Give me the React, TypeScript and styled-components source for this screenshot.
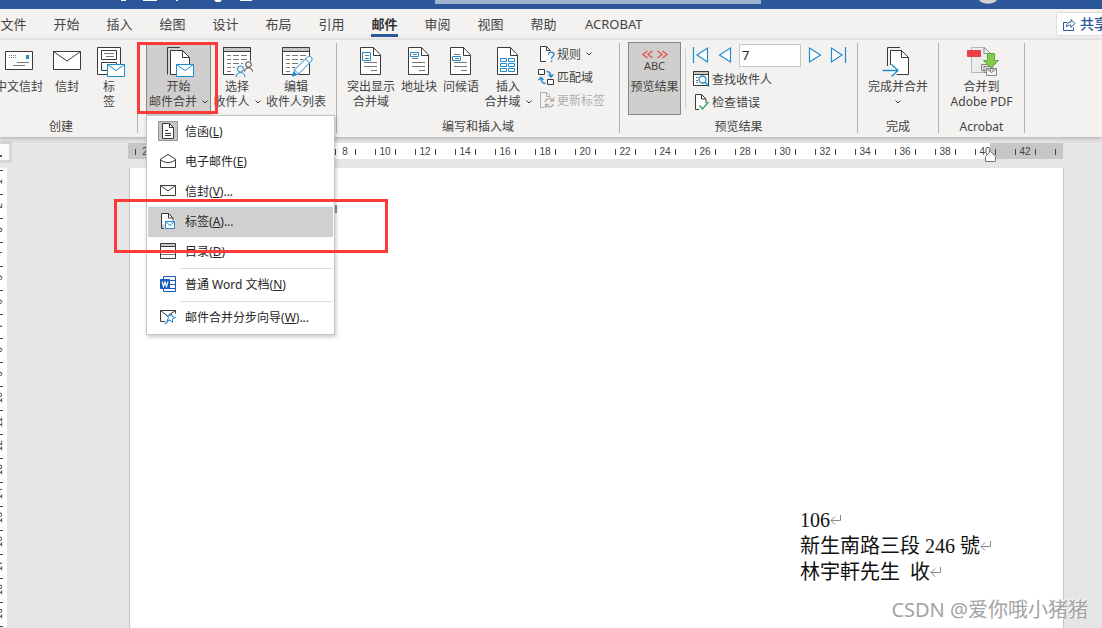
import React from "react";
import styled, { createGlobalStyle, css } from "styled-components";

const ui = `"Noto Sans", "Noto Sans CJK SC", sans-serif`;
const ink = "#3b3a39";
const soft = "#797775";
const blue = "#1e8bcd";
const word = "#2b579a";
const red = "#fe3a39";

const Global = createGlobalStyle`
  *, *::before, *::after { box-sizing: border-box; }
  body { margin: 0; background: #e6e6e6; font-family: ${ui}; font-size: 12px; color: #444; }
  button { font: inherit; color: inherit; background: none; border: 0; padding: 0; margin: 0; }
  svg { display: block; overflow: visible; flex: none; }
`;

const Shell = styled.div`
  position: relative;
  min-height: 100vh;
  display: flex;
  flex-direction: column;
  overflow: hidden;
`;

/* ---------- title bar and tabs ---------- */

const TitleBar = styled.header`
  height: 9px;
  background: ${word};
  display: flex;
`;
const SearchStrip = styled.div`
  flex: none;
  width: 326px;
  height: 4px;
  background: #a0b4d2;
`;
const TitleLeft = styled.div`
  flex: 435 1 0;
`;
const TitleRight = styled.div`
  flex: 341 1 0;
  display: flex;
  justify-content: flex-end;
`;
const Avatar = styled.span`
  margin-right: 105px;
`;

const TabRow = styled.nav`
  height: 31px;
  display: flex;
  background: #f3f2f1;
`;
const Tabs = styled.div`
  display: flex;
  flex: 1;
  margin-left: -13px;
`;
const Tab = styled.button<{ $active?: boolean; $wide?: boolean }>`
  min-width: 53px;
  padding: 0 ${(p) => (p.$wide ? 15 : 0)}px 2px;
  font-size: 13px;
  line-height: 20px;
  display: flex;
  align-items: center;
  justify-content: center;
  ${(p) =>
    p.$active &&
    css`
      font-weight: 700;
      color: #333;
      background: linear-gradient(${word}, ${word}) 50% 25px / 27px 3px no-repeat;
    `}
`;
const Share = styled.button`
  flex: none;
  width: 60px;
  height: 24px;
  margin: 3px -14px 0 0;
  padding-left: 6px;
  display: flex;
  align-items: center;
  gap: 4px;
  background: #fff;
  border: 1px solid #e1dfdd;
  border-radius: 2px;
  color: ${word};
  font-size: 14px;
  font-weight: 500;
  line-height: 20px;
  white-space: nowrap;
`;

/* ---------- ribbon ---------- */

const Ribbon = styled.section`
  position: relative;
  z-index: 2;
  height: 97px;
  padding-top: 2px;
  display: flex;
  background: #f3f2f1;
  box-shadow: 0 1px 5px rgba(0, 0, 0, 0.28);
`;
const Group = styled.div<{ $w: number; $pull?: number }>`
  flex: none;
  width: ${(p) => p.$w}px;
  margin-left: ${(p) => -(p.$pull || 0)}px;
  display: flex;
  flex-direction: column;
  justify-content: space-between;
  padding-bottom: 2px;
`;
const GroupBody = styled.div<{ $pad?: number; $center?: boolean }>`
  display: flex;
  padding-left: ${(p) => p.$pad || 0}px;
  justify-content: ${(p) => (p.$center ? "center" : "flex-start")};
`;
const GroupLabel = styled.div`
  text-align: center;
  line-height: 16px;
`;
const Divider = styled.i<{ $inner?: boolean }>`
  flex: none;
  width: 1px;
  height: ${(p) => (p.$inner ? 60 : 90)}px;
  margin: ${(p) => (p.$inner ? "7px 7px 0 4px" : "1px 0 0")};
  background: ${(p) => (p.$inner ? "#d2d0ce" : "#b3b0ad")};
`;
const Big = styled.button<{ $w: number; $on?: "open" | "pressed" }>`
  flex: none;
  width: ${(p) => p.$w}px;
  height: 73px;
  padding-top: 4px;
  display: flex;
  flex-direction: column;
  align-items: center;
  border: 1px solid transparent;
  line-height: 15px;
  white-space: nowrap;
  ${(p) => p.$on && css`background: #d0cfcd;`}
  ${(p) => p.$on === "open" && css`border-color: #d0cfcd #8a8886;`}
  ${(p) => p.$on === "pressed" && css`border-color: #8a8886;`}
`;
const Pic = styled.span`
  height: 30px;
  margin-bottom: 2px;
  display: flex;
  flex-direction: column;
  align-items: center;
`;
const Line = styled.span`
  height: 15px;
  display: flex;
  align-items: center;
  gap: 5px;
`;
const Abc = styled.span`
  font-size: 11px;
  line-height: 12px;
`;
const Column = styled.div<{ $top?: number; $left?: number }>`
  display: flex;
  flex-direction: column;
  align-items: flex-start;
  padding-top: ${(p) => p.$top || 0}px;
  margin-left: ${(p) => p.$left || 0}px;
`;
const Small = styled.button`
  height: 23px;
  display: flex;
  align-items: center;
  gap: 1px;
  white-space: nowrap;
  &:disabled { color: #b1afad; }
  & > span { display: flex; align-items: center; gap: 5px; }
`;
const Records = styled.div`
  height: 24px;
  display: flex;
  align-items: center;
`;
const Step = styled.button<{ $w: number }>`
  width: ${(p) => p.$w}px;
  height: 24px;
  display: flex;
  align-items: center;
`;
const RecordInput = styled.input`
  width: 62px;
  height: 23px;
  margin-right: 8px;
  padding: 0 2px;
  border: 1px solid #c8c6c4;
  background: #fff;
  color: #222;
  font: 13px ${ui};
`;

/* ---------- drop-down menu ---------- */

const Anchor = styled.div`
  position: relative;
  flex: none;
`;
const Menu = styled.div`
  position: absolute;
  top: 73px;
  left: 0;
  width: 189px;
  padding: 1px;
  display: flex;
  flex-direction: column;
  background: #fff;
  border: 1px solid #c6c6c6;
  box-shadow: 1px 2px 4px rgba(0, 0, 0, 0.22);
  color: #262626;
`;
const Item = styled.button<{ $hot?: boolean }>`
  position: relative;
  height: 30px;
  padding: 0 0 2px 10px;
  display: flex;
  align-items: center;
  gap: 7px;
  text-align: left;
  white-space: nowrap;
  background: ${(p) => (p.$hot ? "#d2d0ce" : "transparent")};
`;
const ItemIcon = styled.span<{ $checked?: boolean }>`
  width: 20px;
  height: 20px;
  display: flex;
  align-items: center;
  justify-content: center;
  border: 1px solid ${(p) => (p.$checked ? "#979593" : "transparent")};
  background: ${(p) => (p.$checked ? "#c8c6c4" : "transparent")};
`;
const Rule = styled.hr`
  width: 153px;
  height: 1px;
  margin: 1px 0 1px auto;
  border: 0;
  background: #dcdcdc;
`;
const ButtonMark = styled.i`
  position: absolute;
  inset: 0 -7px 1px -9px;
  border: 3px solid ${red};
  pointer-events: none;
`;
const ItemMark = styled.i`
  position: absolute;
  inset: -8px -55px -16px -34px;
  border: 3px solid ${red};
  pointer-events: none;
  z-index: 1;
`;

/* ---------- document area ---------- */

const Workspace = styled.main`
  flex: 1;
  display: flex;
  background: #e6e6e6;
`;
const Rail = styled.aside`
  flex: none;
  width: 128px;
  padding-top: 4px;
`;
const TabStop = styled.div`
  width: 12px;
  height: 22px;
  margin-bottom: 5px;
  border: 3px solid #d6d6d6;
  border-left: 0;
  background: #fcfcfc;
  display: flex;
  align-items: flex-end;
  padding-bottom: 3px;
  &::before { content: ""; width: 2px; height: 2px; background: #555; }
`;
const VRuler = styled.div`
  width: 7px;
  padding-top: 2px;
  background: #fff;
  overflow: hidden;
  &::after { content: ""; display: block; width: 3px; height: 1px; background: #444; }
`;
const VCell = styled.div`
  height: 24px;
  display: flex;
  align-items: center;
  background: linear-gradient(#444, #444) 0 0 / 3px 1px no-repeat;
`;
const VNumber = styled.span`
  flex: none;
  margin-left: -7px;
  width: 12px;
  writing-mode: vertical-rl;
  transform: rotate(180deg);
  font: 10px/12px "Liberation Sans", sans-serif;
`;
const Sheet = styled.div`
  flex: 1;
  min-width: 0;
  margin-right: 38px;
  padding-top: 6px;
  display: flex;
  flex-direction: column;
`;
const HRuler = styled.div`
  position: relative;
  height: 16px;
  margin: 0 1px 9px 0;
  background: linear-gradient(#c6c6c6, #c6c6c6) 0 0 / 57px 100% no-repeat,
    linear-gradient(#c6c6c6, #c6c6c6) 100% 0 / 73px 100% no-repeat, #fff;
`;
const Cells = styled.div`
  height: 16px;
  display: flex;
  overflow: hidden;
  & > :first-child { margin-left: -3px; }
`;
const Cell = styled.span`
  flex: none;
  width: 40px;
  padding-top: 2px;
  display: flex;
  align-items: center;
  justify-content: center;
  font: 10px/14px "Liberation Sans", sans-serif;
  background: linear-gradient(#444, #444) 10px 6px / 1px 6px no-repeat,
    linear-gradient(#444, #444) 30px 6px / 1px 6px no-repeat;
`;
const Indent = styled.svg`
  position: absolute;
  right: 66px;
  top: 7px;
`;
const Page = styled.article`
  flex: 1;
  margin-left: 1px;
  padding-top: 37px;
  background: #fff;
  border: 1px solid #c6c6c6;
  border-width: 0 1px;
  color: #111;
`;
const Caret = styled.i`
  display: block;
  width: 2px;
  height: 8px;
  margin-left: 205px;
  background: #8f8f8f;
`;
const Address = styled.div`
  width: 263px;
  margin: 294px 0 0 auto;
  font: 20px/26px "Liberation Serif", "Noto Sans CJK TC", serif;
  white-space: pre;
`;
const AddressLine = styled.div`
  display: flex;
  align-items: center;
  height: 26px;
`;
const Watermark = styled.div`
  position: absolute;
  right: 14px;
  bottom: 4px;
  font-size: 20px;
  line-height: 28px;
  color: #a3a3a3;
  text-shadow: -1px -1px 0 #fff;
  white-space: nowrap;
`;

/* ---------- drawings ---------- */

const Svg = ({ w = 30, h = 30, children }: { w?: number; h?: number; children: React.ReactNode }) => (
  <svg width={w} height={h} viewBox={`0 0 ${w} ${h}`} fill="none" stroke={ink} aria-hidden="true">
    {children}
  </svg>
);
const Chevron = () => (
  <Svg w={6} h={4}><path d="M.5 .5 3 3 5.500 .5" /></Svg>
);
const MiniEnvelope = ({ x, y }: { x: number; y: number }) => (
  <g stroke={blue}>
    <path fill="#fff" d={`M${x} ${y}h17v12h-17z`} />
    <path d={`M${x} ${y}l8.500 6 8.500-6`} />
  </g>
);
const LetterPage = ({ children }: { children?: React.ReactNode }) => (
  <Svg>
    <path fill="#fff" d="M4.500.5h13l7 7.500v19.500h-20z" />
    <path d="M17.500.5v8h7" />
    {children}
  </Svg>
);
const TableSheet = ({ children }: { children?: React.ReactNode }) => (
  <Svg>
    <path fill="#fff" d="M1.500.5h27v27h-27z" />
    <path fill="#c8c6c4" d="M1.500.5h27v4h-27z" />
    <path stroke={soft} d="M5 8.500h4M11 8.500h6M19 8.500h6M5 12.500h4M11 12.500h6M19 12.500h6M5 16.500h4M11 16.500h6M19 16.500h6M5 20.500h4M11 20.500h6M5 24.500h4" />
    {children}
  </Svg>
);
const ChineseEnvelope = () => (
  <Svg>
    <path fill="#fff" d="M1.500 4.500h27v18h-27z" />
    <path strokeDasharray="1 1" d="M5 8.500h8M5 10.500h8" stroke={soft} />
    <path fill={blue} stroke="none" d="M22 8h3v4h-3z" />
    <path stroke={soft} d="M13 15.500h12M9 18.500h12" />
  </Svg>
);
const Envelope = () => (
  <Svg>
    <path fill="#fff" d="M1.500 4.500h27v18h-27z" />
    <path d="M1.500 4.500 15 14 28.500 4.500" />
  </Svg>
);
const Labels = () => (
  <Svg>
    <path fill="#fff" d="M3.500.5h23v27h-23z" />
    <path d="M7.500 3.500h15v9h-15zM7.500 23.500v-8h15v4M7.500 23.500h6" />
    <path stroke={soft} d="M10 6.500h10M12 9.500h8" />
    <MiniEnvelope x={13.5} y={17.5} />
  </Svg>
);
const StartMerge = () => (
  <Svg>
    <path d="M16 .5H3.500V27.500" />
    <path fill="#fff" d="M6.500 3.500h12l7 7v17h-19z" />
    <path d="M18.500 3.500v7h7" />
    <MiniEnvelope x={12.5} y={17.5} />
  </Svg>
);
const SelectPeople = () => (
  <TableSheet>
    <path fill="#f3f2f1" stroke="none" d="M13 19h8v-5h9v16H12z" />
    <circle cx="26.500" cy="17.500" r="2.800" />
    <path d="M22.500 24.500c.5-5 7.500-5 8 0" />
    <g stroke={blue}>
      <circle cx="18.500" cy="22" r="3" />
      <path d="M14 30c.5-6 8.500-6 9 0" />
    </g>
  </TableSheet>
);
const EditList = () => (
  <TableSheet>
    <path stroke="#f3f2f1" strokeWidth="7" d="M14 26 28 12" />
    <path stroke={blue} fill="#fff" d="M11.500 29l2-6L26.500 10c2.500-2 6 1 4 4L17.500 27z" />
    <path fill={blue} stroke={blue} d="M11.500 29l1.500-4 2.500 2.500z" />
    <path stroke={blue} d="M24.500 12l4 4M13.500 23l4 4" />
  </TableSheet>
);
const Highlight = () => (
  <LetterPage>
    <path stroke={soft} d="M8 15.500h13M8 19.500h13M15 23.500h6M9 8.500h4M9 11.500h4" />
    <path stroke={blue} d="M6.500 5.500h8v8h-8z" />
  </LetterPage>
);
const AddressBlock = () => (
  <LetterPage>
    <path stroke={soft} d="M8 11.500h6M8 15.500h13M8 19.500h13M15 23.500h6M9 7.500h4" />
    <path stroke={blue} d="M6.500 5.500h8v4h-8z" />
  </LetterPage>
);
const Greeting = () => (
  <LetterPage>
    <path stroke={soft} d="M8 7.500h6M9 11.500h4M8 15.500h13M8 19.500h13M15 23.500h6" />
    <path stroke={blue} d="M6.500 9.500h8v4h-8z" />
  </LetterPage>
);
const InsertField = () => (
  <LetterPage>
    <path stroke={blue} d="M7.500 11.500h6v3h-6zM15.500 11.500h6v3h-6zM7.500 16.500h6v3h-6zM15.500 16.500h6v3h-6zM7.500 21.500h6v3h-6zM15.500 21.500h6v3h-6z" />
  </LetterPage>
);
const Rules = () => (
  <Svg w={18} h={18}>
    <path fill="#fff" stroke="none" d="M2.500 1.500h6l4 4v11h-10z" />
    <path d="M8 16.500H2.500v-15h6l4 4M8.500 1.500v4h4" />
    <path stroke={blue} strokeWidth="1.300" d="M10.500 9.500c0-3.500 5.500-3 5.500 0 0 2.200-2.500 2-2.500 4.500M13.500 15.500v1.500" />
  </Svg>
);
const Match = () => (
  <Svg w={18} h={18}>
    <path fill="#fff" d="M.5 1.500h6v5h-6zM9.500 11.500h6v5h-6z" />
    <path stroke={blue} strokeWidth="1.300" d="M8.500 3.500c3 0 4.500 1.500 4.500 5.500M10.500 6.500l2.500 2.500 2.500-2.500M7.500 15.500c-3 0-4.500-1.500-4.500-5.500M.5 12l2.500-2.500 2.500 2.500" />
  </Svg>
);
const Update = () => (
  <Svg w={18} h={18}>
    <g stroke="#b1afad">
      <path d="M6 16.500H2.500v-15h6l4 4M8.500 1.500v4h4" />
      <path strokeWidth="1.300" d="M7 11c1-4 6-4.500 8-1.500M15.500 6.500v3.500h-3.500M15.500 13c-1 3.500-6 4-7.500 1M7.500 17v-3.500h3.500" />
    </g>
  </Svg>
);
const PreviewArrows = () => (
  <Svg w={28} h={13}>
    <path stroke="#e8504c" strokeWidth="1.300" d="M6.500 4 2 7.500 6.500 11M11.500 4 7 7.500l4.500 3.500M16.500 4l4.500 3.500-4.500 3.500M21.500 4 26 7.500 21.500 11" />
  </Svg>
);
const FindPeople = () => (
  <Svg w={18} h={18}>
    <path fill="#fff" d="M.5 1.500h15v14H.5z" />
    <path fill="#c8c6c4" d="M.5 1.500h15v3H.5z" />
    <path stroke={soft} d="M3 7.500h2M3 10.500h2M3 12.500h2" />
    <circle cx="9.500" cy="9.500" r="3.500" stroke={blue} fill="#fff" strokeWidth="1.300" />
    <path stroke={blue} strokeWidth="1.500" d="M12 12l4 4.500" />
  </Svg>
);
const CheckErrors = () => (
  <Svg w={18} h={18}>
    <path fill="#fff" stroke="none" d="M2.500 1.500h6l4 4v10h-10z" />
    <path d="M6 16.500H2.500v-15h6l4.500 4.500v4M8.500 1.500v4.500h4.500" />
    <path stroke="#35a35b" strokeWidth="1.400" d="M6.500 12.500l3 3.500 6-7" />
  </Svg>
);
const Finish = () => (
  <Svg>
    <path d="M17 .5H4.500V19" />
    <path fill="#fff" stroke="none" d="M7.500 3.500h11l7 7v17h-18z" />
    <path d="M7.500 18V3.500h11l7 7v17h-12M18.500 3.500v7h7" />
    <path stroke={blue} strokeWidth="1.300" d="M-.5 23.500h15M8.500 17.500l6.500 6-6.500 6" />
  </Svg>
);
const Pdf = () => (
  <Svg>
    <path fill="#ececec" stroke="#b8b8b8" d="M4.500.5h13l6 6v19h-19z" />
    <path fill="#fff" stroke="#888" d="M17 .5v6h6.500z" />
    <path fill="#ee4046" stroke="#e0454a" d="M.5 3.500h13v6H.5z" />
    <path fill="#ddd" stroke="#888" d="M14.500 17.500h9v6h-9zM17 19.500h9v6h-9z" />
    <path fill="#f1f1f1" stroke="#888" d="M19.500 21.500h10v7h-10zM19.500 21.500l5 4 5-4" />
    <path fill="#84c94c" stroke="#5fa838" d="M20.500 6.500h7v7h4l-7.500 7.500-7.500-7.500h4z" />
  </Svg>
);
const ShareIcon = () => (
  <Svg w={13} h={14}>
    <g stroke={word}>
      <path d="M4 5.500H.5v8h10v-3" />
      <path d="M3.500 10c0-3.500 1.500-5 4.500-5V2.500l4 4-4 4V8c-2 0-3.500.5-4.500 2z" />
    </g>
  </Svg>
);
const StepArrow = ({ back, bar }: { back?: boolean; bar?: boolean }) => (
  <Svg w={16} h={16}>
    <g stroke={blue} strokeWidth="1.200" fill="#fff">
      {back ? (
        <path d={bar ? "M14.500 1v14L4 8zM.5 0v16" : "M12.500 1v14L1.500 8z"} />
      ) : (
        <path d={bar ? "M.5 1v14L11 8zM14.500 0v16" : "M.5 1v14L11.500 8z"} />
      )}
    </g>
  </Svg>
);
const LetterGlyph = () => (
  <Svg w={12} h={16}>
    <path fill="#fff" d="M.5.5h7l4 4v11H.5z" />
    <path d="M7.500.5v4h4M3 7.500h3M3 10.500h6M3 12.500h6" />
  </Svg>
);
const MailGlyph = () => (
  <Svg w={16} h={14}>
    <path fill="#fff" d="M.5 5 8 .5 15.500 5v8.500H.5z" />
    <path d="M.5 5.500c3 4 12 4 15 0" />
  </Svg>
);
const EnvelopeGlyph = () => (
  <Svg w={16} h={12}>
    <path fill="#fff" d="M.5.5h15v10H.5z" />
    <path d="M.5.5 8 6 15.500.5" />
  </Svg>
);
const LabelGlyph = () => (
  <Svg w={14} h={16}>
    <path fill="#fff" stroke="none" d="M.5.5h7l4 4v7h-11z" />
    <path d="M3 15.500H.5V.5h7l4.500 4.500v2M7.500.5v4.500h4.500" />
    <path fill="#fff" stroke={blue} d="M4.500 8.500h9v7h-9zM4.500 8.500 9 12.500l4.500-4" />
  </Svg>
);
const DirectoryGlyph = () => (
  <Svg w={16} h={16}>
    <path fill="#fff" d="M.5.5h15v15H.5z" />
    <path fill="#c8c6c4" d="M.5.5h15v3H.5z" />
    <path stroke={soft} d="M1 7.500h14M1 11.500h14" />
  </Svg>
);
const WordGlyph = () => (
  <Svg w={16} h={16}>
    <g stroke="#185abd">
      <path fill="#fff" d="M3.500.5h12v15h-12zM3.500 4.500h12M3.500 8.500h12M3.500 12.500h12" />
      <path fill="#185abd" d="M.5 3.500h9v9h-9z" />
      <path stroke="#fff" strokeWidth="1.200" d="M2 5.500l1.500 5 1.500-4.500 1.500 4.500 1.500-5" />
    </g>
  </Svg>
);
const WizardGlyph = () => (
  <Svg w={16} h={14}>
    <path fill="#fff" d="M5 11.500H.5V.5h15v3M.5.5l7 5.500 8-5.500" />
    <path stroke={blue} strokeWidth="1.200" d="M5 14l5-5" />
    <path stroke={blue} fill="#fff" d="M11.500 3.500l.5 3 3.500 1-3 1.500v3.500l-2.500-2.500-3 .5 1.500-2.500-1-2.500 2.500.5z" />
  </Svg>
);
const Return = () => (
  <Svg w={12} h={10}>
    <path stroke="#8a8a8a" d="M10.500 0v5.500H1M5 1.500l-4 4 4 4" />
  </Svg>
);

/* ---------- page ---------- */

const tabs = ["文件", "开始", "插入", "绘图", "设计", "布局", "引用", "邮件", "审阅", "视图", "帮助", "ACROBAT"];
const rulerMarks = ["2", "", ...Array.from({ length: 21 }, (_, i) => String((i + 1) * 2)), ""];

const BigButton = ({ w, icon, lines, drop, on }: {
  w: number; icon: React.ReactNode; lines: string[]; drop?: boolean; on?: "open" | "pressed";
}) => (
  <Big $w={w} $on={on}>
    <Pic>{icon}</Pic>
    {lines.map((text, i) => (
      <Line key={i}>
        {text}
        {drop && i === lines.length - 1 && <Chevron />}
      </Line>
    ))}
  </Big>
);

const MenuItem = ({ icon, text, k, tail, checked, hot }: {
  icon: React.ReactNode; text: string; k: string; tail?: string; checked?: boolean; hot?: boolean;
}) => (
  <Item role="menuitem" $hot={hot}>
    <ItemIcon $checked={checked}>{icon}</ItemIcon>
    <span>{text}(<u>{k}</u>){tail}</span>
    {hot && <ItemMark />}
  </Item>
);

export default function App() {
  return (
    <Shell>
      <Global />
      <TitleBar>
        <TitleLeft>
          <Svg w={260} h={4}>
            <path stroke="none" fill="#fff" d="M121 0h5v1h-5zM143 0h14v1h-14zM176 0h2v1h-2zM214 0h8l-2 2h-4zM240 0h12v1h-12z" />
          </Svg>
        </TitleLeft>
        <SearchStrip />
        <TitleRight>
          <Avatar>
            <Svg w={18} h={4}>
              <path stroke="none" fill="#d0d0d0" d="M0 0h18c-3 5-15 5-18 0z" />
            </Svg>
          </Avatar>
        </TitleRight>
      </TitleBar>
      <TabRow>
        <Tabs>
          {tabs.map((t) => (
            <Tab key={t} $active={t === "邮件"} $wide={t === "ACROBAT"}>{t}</Tab>
          ))}
        </Tabs>
        <Share><ShareIcon />共享</Share>
      </TabRow>

      <Ribbon>
        <Group $w={152} $pull={15}>
          <GroupBody $pad={8}>
            <BigButton w={52} icon={<ChineseEnvelope />} lines={["中文信封"]} />
            <BigButton w={44} icon={<Envelope />} lines={["信封"]} />
            <BigButton w={40} icon={<Labels />} lines={["标", "签"]} />
          </GroupBody>
          <GroupLabel>创建</GroupLabel>
        </Group>
        <Divider />
        <Group $w={198}>
          <GroupBody $pad={8}>
            <Anchor>
              <BigButton w={65} icon={<StartMerge />} lines={["开始", "邮件合并"]} drop on="open" />
              <Menu role="menu">
                <MenuItem icon={<LetterGlyph />} text="信函" k="L" checked />
                <MenuItem icon={<MailGlyph />} text="电子邮件" k="E" />
                <MenuItem icon={<EnvelopeGlyph />} text="信封" k="V" tail="..." />
                <MenuItem icon={<LabelGlyph />} text="标签" k="A" tail="..." hot />
                <MenuItem icon={<DirectoryGlyph />} text="目录" k="D" />
                <Rule />
                <MenuItem icon={<WordGlyph />} text="普通 Word 文档" k="N" />
                <Rule />
                <MenuItem icon={<WizardGlyph />} text="邮件合并分步向导" k="W" tail="..." />
              </Menu>
              <ButtonMark />
            </Anchor>
            <BigButton w={52} icon={<SelectPeople />} lines={["选择", "收件人"]} drop />
            <BigButton w={66} icon={<EditList />} lines={["编辑", "收件人列表"]} />
          </GroupBody>
        </Group>
        <Divider />
        <Group $w={282}>
          <GroupBody $pad={7}>
            <BigButton w={54} icon={<Highlight />} lines={["突出显示", "合并域"]} />
            <BigButton w={42} icon={<AddressBlock />} lines={["地址块"]} />
            <BigButton w={42} icon={<Greeting />} lines={["问候语"]} />
            <BigButton w={52} icon={<InsertField />} lines={["插入", "合并域"]} drop />
            <Column $left={4}>
              <Small><Rules /><span>规则<Chevron /></span></Small>
              <Small><Match /><span>匹配域</span></Small>
              <Small disabled><Update /><span>更新标签</span></Small>
            </Column>
          </GroupBody>
          <GroupLabel>编写和插入域</GroupLabel>
        </Group>
        <Divider />
        <Group $w={237}>
          <GroupBody $pad={8}>
            <BigButton w={53} on="pressed" icon={<><PreviewArrows /><Abc>ABC</Abc></>} lines={["预览结果"]} />
            <Divider $inner />
            <Column $top={1}>
              <Records>
                <Step $w={25} aria-label="首记录"><StepArrow back bar /></Step>
                <Step $w={21} aria-label="上一记录"><StepArrow back /></Step>
                <RecordInput aria-label="记录" defaultValue="7" />
                <Step $w={22} aria-label="下一记录"><StepArrow /></Step>
                <Step $w={16} aria-label="尾记录"><StepArrow bar /></Step>
              </Records>
              <Small><FindPeople /><span>查找收件人</span></Small>
              <Small><CheckErrors /><span>检查错误</span></Small>
            </Column>
          </GroupBody>
          <GroupLabel>预览结果</GroupLabel>
        </Group>
        <Divider />
        <Group $w={80}>
          <GroupBody $center>
            <BigButton w={66} icon={<Finish />} lines={["完成并合并", ""]} drop />
          </GroupBody>
          <GroupLabel>完成</GroupLabel>
        </Group>
        <Divider />
        <Group $w={85}>
          <GroupBody $center>
            <BigButton w={76} icon={<Pdf />} lines={["合并到", "Adobe PDF"]} />
          </GroupBody>
          <GroupLabel>Acrobat</GroupLabel>
        </Group>
        <Divider />
      </Ribbon>

      <Workspace>
        <Rail>
          <TabStop />
          <VRuler>
            {Array.from({ length: 19 }, (_, i) => (
              <VCell key={i}><VNumber>{i + 1}</VNumber></VCell>
            ))}
          </VRuler>
        </Rail>
        <Sheet>
          <HRuler>
            <Cells>
              {rulerMarks.map((m, i) => <Cell key={i}>{m}</Cell>)}
            </Cells>
            <Indent width="12" height="12" viewBox="0 0 12 12">
              <path d="M.5 11.500v-5l5-5 5 5v5z" fill="#fff" stroke="#777" />
            </Indent>
          </HRuler>
          <Page>
            <Caret />
            <Address>
              <AddressLine>106<Return /></AddressLine>
              <AddressLine>新生南路三段 246 號<Return /></AddressLine>
              <AddressLine>林宇軒先生  收<Return /></AddressLine>
            </Address>
          </Page>
        </Sheet>
      </Workspace>
      <Watermark>CSDN @爱你哦小猪猪</Watermark>
    </Shell>
  );
}
